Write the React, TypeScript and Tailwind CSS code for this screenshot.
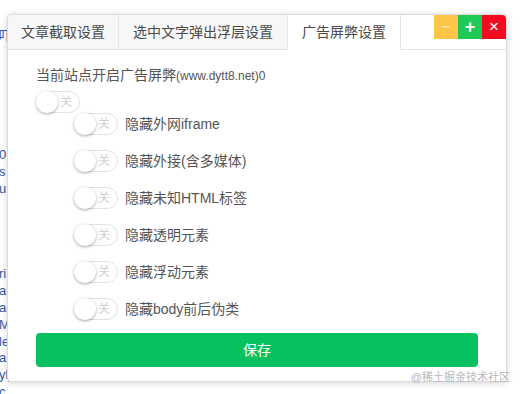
import React from "react";

const options = [
  "隐藏外网iframe",
  "隐藏外接(含多媒体)",
  "隐藏未知HTML标签",
  "隐藏透明元素",
  "隐藏浮动元素",
  "隐藏body前后伪类",
];

const tabs = ["文章截取设置", "选中文字弹出浮层设置", "广告屏弊设置"];

const bgLines: [number, string][] = [
  [28, "吓"],
  [147, "0:"],
  [164, "s"],
  [181, "u:"],
  [266, "ri"],
  [283, "a l"],
  [300, "ac"],
  [317, "Mc"],
  [334, "le"],
  [350, "a"],
  [367, "yl_"],
  [384, "c"],
];

const Toggle: React.FC = () => (
  <div className="relative flex h-[22px] w-[44px] shrink-0 items-center justify-end rounded-full border border-[#e2e2e2] bg-white pr-[7px]">
    <span className="text-[12px] leading-none text-[#d0d0d0]">关</span>
    <span className="absolute left-[-1px] top-[-1px] h-[22px] w-[22px] rounded-full bg-white shadow-[0_1px_3px_rgba(0,0,0,0.35)]" />
  </div>
);

export default function App() {
  return (
    <div
      className="relative h-[394px] w-[523px] overflow-hidden bg-white"
      style={{ fontFamily: '"Liberation Sans", "Noto Sans CJK SC", sans-serif' }}
    >
      {/* page underneath the window */}
      <div className="absolute left-0 top-0 h-full w-[9px] overflow-hidden">
        {bgLines.map(([y, t]) => (
          <div
            key={y}
            className="absolute left-[-1px] whitespace-nowrap text-[13px] leading-[16px] text-[#2d5aa8]"
            style={{ top: y }}
          >
            {t}
          </div>
        ))}
      </div>

      <div className="relative z-10 ml-[7px] mt-[14px] flex h-[368px] w-[500px] flex-col rounded-[4px] border border-[#dcdcdc] bg-white shadow-[0_1px_6px_rgba(0,0,0,0.18)]">
        <div className="flex h-[35px] shrink-0">
          {tabs.map((t, i) =>
            i === 2 ? (
              <div
                key={t}
                className="flex items-center border-r border-[#e4e4e4] bg-white px-[14px] text-[14px] text-[#4a4a4a]"
              >
                {t}
              </div>
            ) : (
              <div
                key={t}
                className={`flex items-center border-b border-r border-[#e4e4e4] bg-[#f7f7f7] text-[14px] text-[#4a4a4a] ${
                  i === 0 ? "rounded-tl-[4px] px-[13px]" : "px-[14px]"
                }`}
              >
                {t}
              </div>
            )
          )}
          <div className="flex flex-1 items-start justify-end border-b border-[#e4e4e4]">
            <div className="flex">
              <div className="flex h-[24px] w-[24px] items-center justify-center bg-[#fec647] text-[16px] text-white/70">
                −
              </div>
              <div className="flex h-[24px] w-[24px] items-center justify-center bg-[#1fc957] text-[18px] font-bold text-white">
                +
              </div>
              <div className="flex h-[24px] w-[24px] items-center justify-center rounded-tr-[4px] bg-[#f20a20] text-[17px] text-white">
                ×
              </div>
            </div>
          </div>
        </div>

        <div className="flex flex-1 flex-col px-[28px] pt-[15px]">
          <div className="text-[14px] leading-[20px] text-[#555]">
            当前站点开启广告屏弊<span className="text-[12px]">(www.dytt8.net)0</span>
          </div>
          <div className="mt-[5px]">
            <Toggle />
          </div>
          <div className="flex flex-col gap-[15px] pl-[38px]">
            {options.map((o) => (
              <div key={o} className="flex h-[22px] items-center gap-[7px]">
                <Toggle />
                <span className="text-[14px] text-[#555]">{o}</span>
              </div>
            ))}
          </div>
          <button className="mt-[13px] flex h-[34px] w-full items-center justify-center rounded-[4px] bg-[#07c160] text-[14px] text-white">
            保存
          </button>
        </div>
      </div>

      <div className="absolute bottom-[9px] right-[13px] z-20 text-[11px] text-[#b8b8b8]">
        @稀土掘金技术社区
      </div>
    </div>
  );
}
